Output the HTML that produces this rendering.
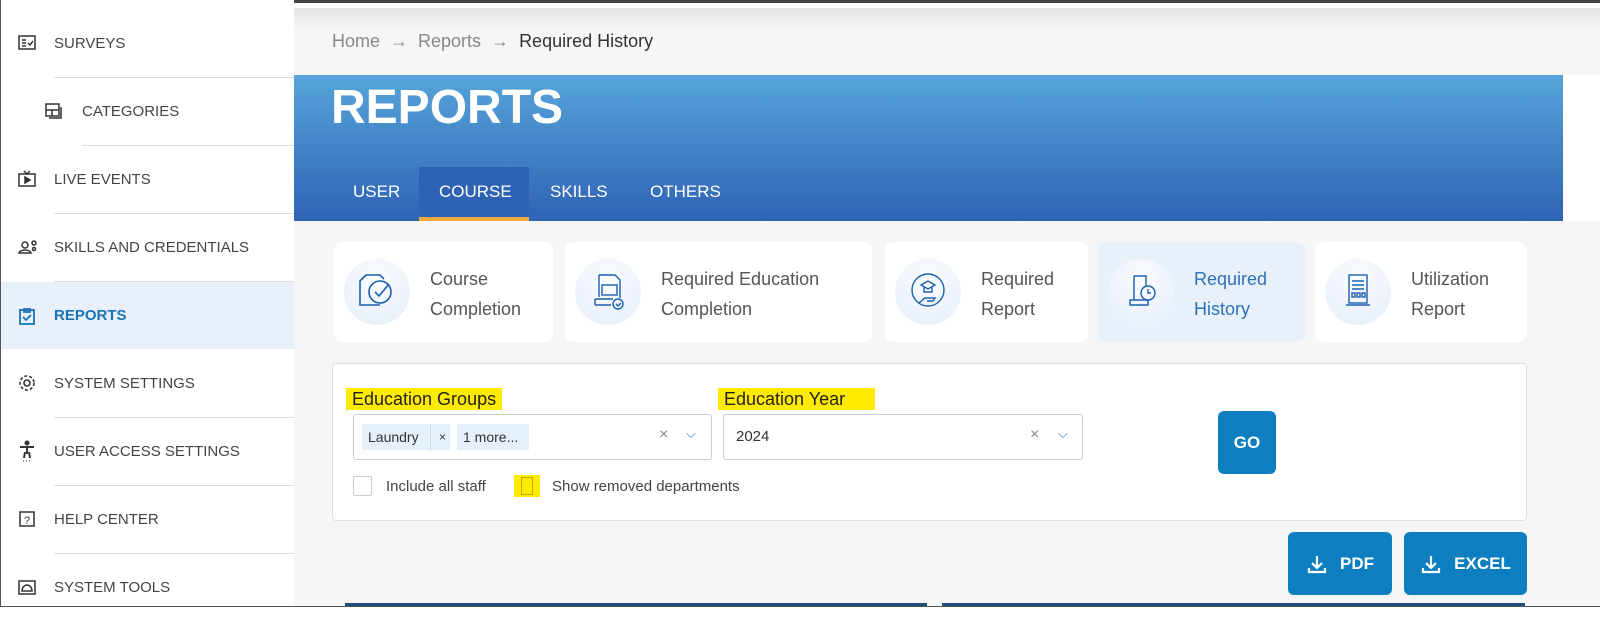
<!DOCTYPE html>
<html><head><style>
*{box-sizing:border-box;margin:0;padding:0}
body{width:1600px;height:619px;overflow:hidden;background:#fff;font-family:"Liberation Sans",sans-serif;position:relative}
.abs{position:absolute}
.side{left:0;top:0;width:294px;height:619px;background:#fff;border-left:1px solid #555}
.row{position:absolute;left:0;width:294px;height:68px;font-size:15px;color:#444;display:flex;align-items:center}
.row span{position:absolute;left:53px}
.row svg{position:absolute;left:16px}
.sep{position:absolute;left:53px;width:241px;height:1px;background:#ddd}
.main{left:294px;top:8px;width:1306px;height:611px;background:#f6f6f6}
.banner{left:294px;top:75px;width:1269px;height:146px;background:linear-gradient(#56a4da,#2f63b4)}
.tab{position:absolute;top:182px;color:#fff;font-size:17px}
.card{position:absolute;top:242px;height:100px;background:#fff;border-radius:8px}
.card .ic{position:absolute;left:10px;top:17px;width:66px;height:66px;border-radius:50%;background:radial-gradient(circle at 50% 30%,#fafcff,#e6eef9);}
.card .t{position:absolute;left:96px;top:22px;font-size:18px;line-height:30px;color:#555}
.hl{position:absolute;background:#ffeb00;font-size:18px;color:#222;padding:0 6px;height:22px;line-height:22px}
.sel{position:absolute;top:414px;height:46px;border:1px solid #ccc;border-radius:3px;background:#fff}
.btn{position:absolute;background:#0d7ebf;border-radius:6px;color:#fff;font-weight:bold;font-size:17px;display:flex;align-items:center;justify-content:center}
</style></head><body>
<div class="abs" style="left:0;top:0;width:1600px;height:3px;background:#444"></div>
<div class="abs side">
<div class="row" style="top:9px"><svg width="20" height="20" viewBox="0 0 20 20" fill="none" stroke="#333" stroke-width="1.5"><rect x="2" y="3" width="16" height="13"/><path d="M5 7h4M5 10h4M5 13h4M11 10l2 2 3-4"/></svg><span>SURVEYS</span></div>
<div class="sep" style="top:77px"></div>
<div class="row" style="top:77px"><svg style="left:43px" width="20" height="20" viewBox="0 0 20 20" fill="none" stroke="#333" stroke-width="1.5"><rect x="2" y="3" width="13" height="12"/><path d="M2 9h13M8 9v6M17 6v11H5"/></svg><span style="left:81px">CATEGORIES</span></div>
<div class="sep" style="top:145px;left:81px"></div>
<div class="row" style="top:145px"><svg width="20" height="20" viewBox="0 0 20 20" fill="none" stroke="#333" stroke-width="1.5"><rect x="2" y="5" width="16" height="12"/><path d="M7 2l3 3 3-3"/><path d="M8 8l5 3-5 3z" fill="#333"/></svg><span>LIVE EVENTS</span></div>
<div class="sep" style="top:213px"></div>
<div class="row" style="top:213px"><svg width="22" height="20" viewBox="0 0 22 20" fill="none" stroke="#333" stroke-width="1.5"><circle cx="8" cy="8" r="3"/><path d="M2 16c1-4 11-4 12 0z"/><circle cx="17" cy="6" r="2"/><circle cx="17" cy="12" r="1.5"/></svg><span>SKILLS AND CREDENTIALS</span></div>
<div class="sep" style="top:281px"></div>
<div class="row" style="top:282px;background:#e8f0f9;height:67px;color:#1a73b8;font-weight:bold"><svg width="20" height="20" viewBox="0 0 20 20" fill="none" stroke="#1a73b8" stroke-width="1.8"><rect x="3" y="4" width="14" height="14"/><path d="M7 3h6v3H7zM6 11l3 3 5-5"/></svg><span>REPORTS</span></div>
<div class="row" style="top:349px"><svg width="20" height="20" viewBox="0 0 20 20" fill="none" stroke="#333" stroke-width="1.6"><circle cx="10" cy="10" r="3"/><circle cx="10" cy="10" r="7" stroke-dasharray="3 2"/></svg><span>SYSTEM SETTINGS</span></div>
<div class="sep" style="top:417px"></div>
<div class="row" style="top:417px"><svg width="20" height="22" viewBox="0 0 20 22" fill="none" stroke="#333" stroke-width="2"><circle cx="10" cy="3" r="1.5" fill="#333"/><path d="M3 7h14M10 7v7M7 18l1-6M13 18l-1-6"/><path d="M6 21h1M9 21h1M12 21h1" stroke-width="1"/></svg><span>USER ACCESS SETTINGS</span></div>
<div class="sep" style="top:485px"></div>
<div class="row" style="top:485px"><svg width="20" height="20" viewBox="0 0 20 20" fill="none" stroke="#333" stroke-width="1.5"><rect x="3" y="3" width="14" height="14"/><text x="10" y="15" font-size="11" text-anchor="middle" fill="#333" stroke="none" font-family="Liberation Sans">?</text></svg><span>HELP CENTER</span></div>
<div class="sep" style="top:553px"></div>
<div class="row" style="top:553px"><svg width="20" height="20" viewBox="0 0 20 20" fill="none" stroke="#333" stroke-width="1.5"><rect x="2" y="4" width="16" height="13"/><path d="M5 14c0-4 3-6 5-6s5 2 5 6z"/></svg><span>SYSTEM TOOLS</span></div>
</div>
<div class="abs main"></div>
<div class="abs" style="left:294px;top:8px;width:1306px;height:20px;background:linear-gradient(#e4e4e4,#f6f6f6)"></div>
<div class="abs" style="left:332px;top:31px;font-size:18px;color:#888">Home &nbsp;→&nbsp; Reports &nbsp;→&nbsp; <span style="color:#333">Required History</span></div>
<div class="abs banner"></div>
<div class="abs" style="left:1563px;top:75px;width:37px;height:146px;background:#fff"></div>
<div class="abs" style="left:331px;top:80px;font-size:48px;font-weight:bold;color:#fff">REPORTS</div>
<div class="abs" style="left:419px;top:167px;width:110px;height:54px;background:#2e62b3;border-bottom:4px solid #f7a940"></div>
<div class="tab" style="left:353px">USER</div>
<div class="tab" style="left:439px">COURSE</div>
<div class="tab" style="left:550px">SKILLS</div>
<div class="tab" style="left:650px">OTHERS</div>

<div class="card" style="left:334px;width:219px"><div class="ic"><svg width="66" height="66" viewBox="0 0 66 66" fill="none" stroke="#1b5fb0" stroke-width="1.6"><path d="M22 16h14l4 4M22 16l-6 6v24h20"/><circle cx="36" cy="33" r="11"/><path d="M31 33l4 4 10-12"/></svg></div><div class="t">Course<br>Completion</div></div>
<div class="card" style="left:565px;width:307px"><div class="ic"><svg width="66" height="66" viewBox="0 0 66 66" fill="none" stroke="#1b5fb0" stroke-width="1.4"><path d="M24 16h16l5 5v18M24 16v22"/><rect x="27" y="26" width="15" height="10"/><path d="M20 40h18M20 46h16M20 40v6"/><circle cx="43" cy="45" r="5"/><path d="M41 45l2 2 3-3"/></svg></div><div class="t">Required Education<br>Completion</div></div>
<div class="card" style="left:885px;width:203px"><div class="ic"><svg width="66" height="66" viewBox="0 0 66 66" fill="none" stroke="#1b5fb0" stroke-width="1.4"><circle cx="33" cy="31" r="16"/><path d="M26 26l7-4 7 4-7 4zM29 28v5h8v-5M24 44l6-5h10l-2 3h-6"/></svg></div><div class="t">Required<br>Report</div></div>
<div class="card" style="left:1098px;width:207px;background:#e8f0f9"><div class="ic"><svg width="66" height="66" viewBox="0 0 66 66" fill="none" stroke="#1b5fb0" stroke-width="1.4"><path d="M26 17h12v10M26 17v24M22 41h18v5H22z"/><circle cx="40" cy="34" r="7"/><path d="M40 30v4h3"/></svg></div><div class="t" style="color:#2d72b8">Required<br>History</div></div>
<div class="card" style="left:1315px;width:212px"><div class="ic"><svg width="66" height="66" viewBox="0 0 66 66" fill="none" stroke="#1b5fb0" stroke-width="1.4"><rect x="24" y="16" width="18" height="28"/><path d="M27 22h12M27 26h12M27 30h12"/><rect x="27" y="34" width="3" height="4"/><rect x="32" y="34" width="3" height="4"/><rect x="37" y="34" width="3" height="4"/><path d="M21 46h24"/></svg></div><div class="t">Utilization<br>Report</div></div>

<div class="abs" style="left:332px;top:363px;width:1195px;height:158px;background:#fff;border:1px solid #e0e0e0;border-radius:4px"></div>
<div class="hl" style="left:346px;top:388px">Education Groups</div>
<div class="hl" style="left:718px;top:388px;width:157px">Education Year</div>
<div class="sel" style="left:353px;width:359px">
<div class="abs" style="left:8px;top:9px;height:26px;width:88px;background:#e5f0fb;font-size:14px;color:#333;line-height:26px;padding-left:6px">Laundry<span style="position:absolute;left:68px;border-left:1px solid #c6dcf2;padding-left:8px;font-size:12px">×</span></div>
<div class="abs" style="left:103px;top:9px;height:26px;width:72px;background:#e5f0fb;font-size:14px;color:#333;line-height:26px;padding-left:6px">1 more...</div>
<div class="abs" style="left:305px;top:11px;color:#888;font-size:16px">×</div>
<div class="abs" style="left:332px;top:11px;color:#1b6fb8;font-size:13px">⌵</div>
</div>
<div class="sel" style="left:723px;width:360px">
<div class="abs" style="left:12px;top:13px;font-size:15px;color:#333">2024</div>
<div class="abs" style="left:306px;top:11px;color:#888;font-size:16px">×</div>
<div class="abs" style="left:334px;top:11px;color:#1b6fb8;font-size:13px">⌵</div>
</div>
<div class="btn" style="left:1218px;top:411px;width:58px;height:63px">GO</div>
<div class="abs" style="left:353px;top:476px;width:19px;height:20px;border:1px solid #ccc;border-radius:2px;background:#fff"></div>
<div class="abs" style="left:386px;top:478px;font-size:15px;color:#444">Include all staff</div>
<div class="abs" style="left:514px;top:475px;width:26px;height:22px;background:#ffeb00"><div style="margin:2px 7px;width:12px;height:18px;border:1px solid #bba800"></div></div>
<div class="abs" style="left:552px;top:478px;font-size:15px;color:#444">Show removed departments</div>

<div class="btn" style="left:1288px;top:532px;width:104px;height:63px"><svg width="22" height="22" viewBox="0 0 22 22" fill="none" stroke="#fff" stroke-width="2.2" style="margin-right:12px"><path d="M11 3v11M6 10l5 5 5-5M3 15v4h16v-4"/></svg>PDF</div>
<div class="btn" style="left:1404px;top:532px;width:123px;height:63px"><svg width="22" height="22" viewBox="0 0 22 22" fill="none" stroke="#fff" stroke-width="2.2" style="margin-right:12px"><path d="M11 3v11M6 10l5 5 5-5M3 15v4h16v-4"/></svg>EXCEL</div>
<div class="abs" style="left:345px;top:603px;width:582px;height:16px;background:#1d4e7a"></div>
<div class="abs" style="left:942px;top:603px;width:583px;height:16px;background:#1d4e7a"></div>
<div class="abs" style="left:0;top:606px;width:1600px;height:13px;background:#fff;border-top:1px solid #555"></div>
</body></html>
